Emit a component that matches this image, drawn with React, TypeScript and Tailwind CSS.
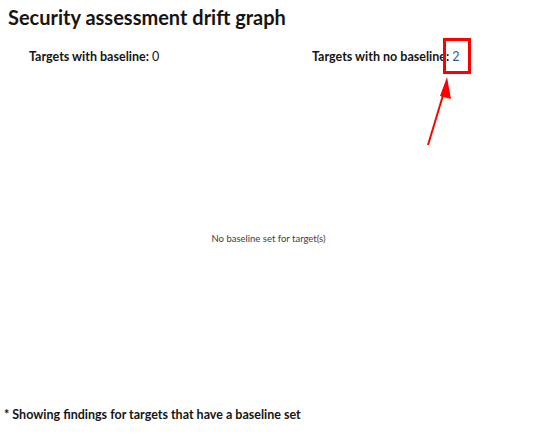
export default function App() {
    return (
        <div className="relative h-[437px] w-[537px] bg-white text-[#161513]" style={{ fontFamily: 'Lato, "Liberation Sans", sans-serif' }}>
            <div className="flex h-full flex-col">
                <h1 className="pl-2 pt-[3px] text-[20px] font-bold leading-[28px]">Security assessment drift graph</h1>

                <div className="mt-[16px] flex text-[12.5px] font-bold leading-[20px]">
                    <div className="w-[312px] pl-[29px]">
                        Targets with baseline: <span className="font-normal">0</span>
                    </div>
                    <div>
                        Targets with no baseline: <span className="font-normal text-[#2b6390]">2</span>
                    </div>
                </div>

                <div className="flex flex-1 items-center justify-center pt-[6px] text-[9.5px] text-[#3d3d3d]">
                    No baseline set for target(s)
                </div>

                <div className="pb-[12px] pl-1 text-[12.5px] font-bold leading-[20px]">
                    * Showing findings for targets that have a baseline set
                </div>
            </div>

            {/* annotation */}
            <div className="absolute left-[443px] top-[38px] h-[36px] w-[28px] border-[3px] border-[#ff0000]" />
            <svg className="absolute left-0 top-0" width="537" height="437" viewBox="0 0 537 437">
                <line x1="428" y1="145" x2="444" y2="92" stroke="#ff0000" strokeWidth="2" />
                <polygon points="447,77 451,99 440,96" fill="#ff0000" />
            </svg>
        </div>
    );
}
